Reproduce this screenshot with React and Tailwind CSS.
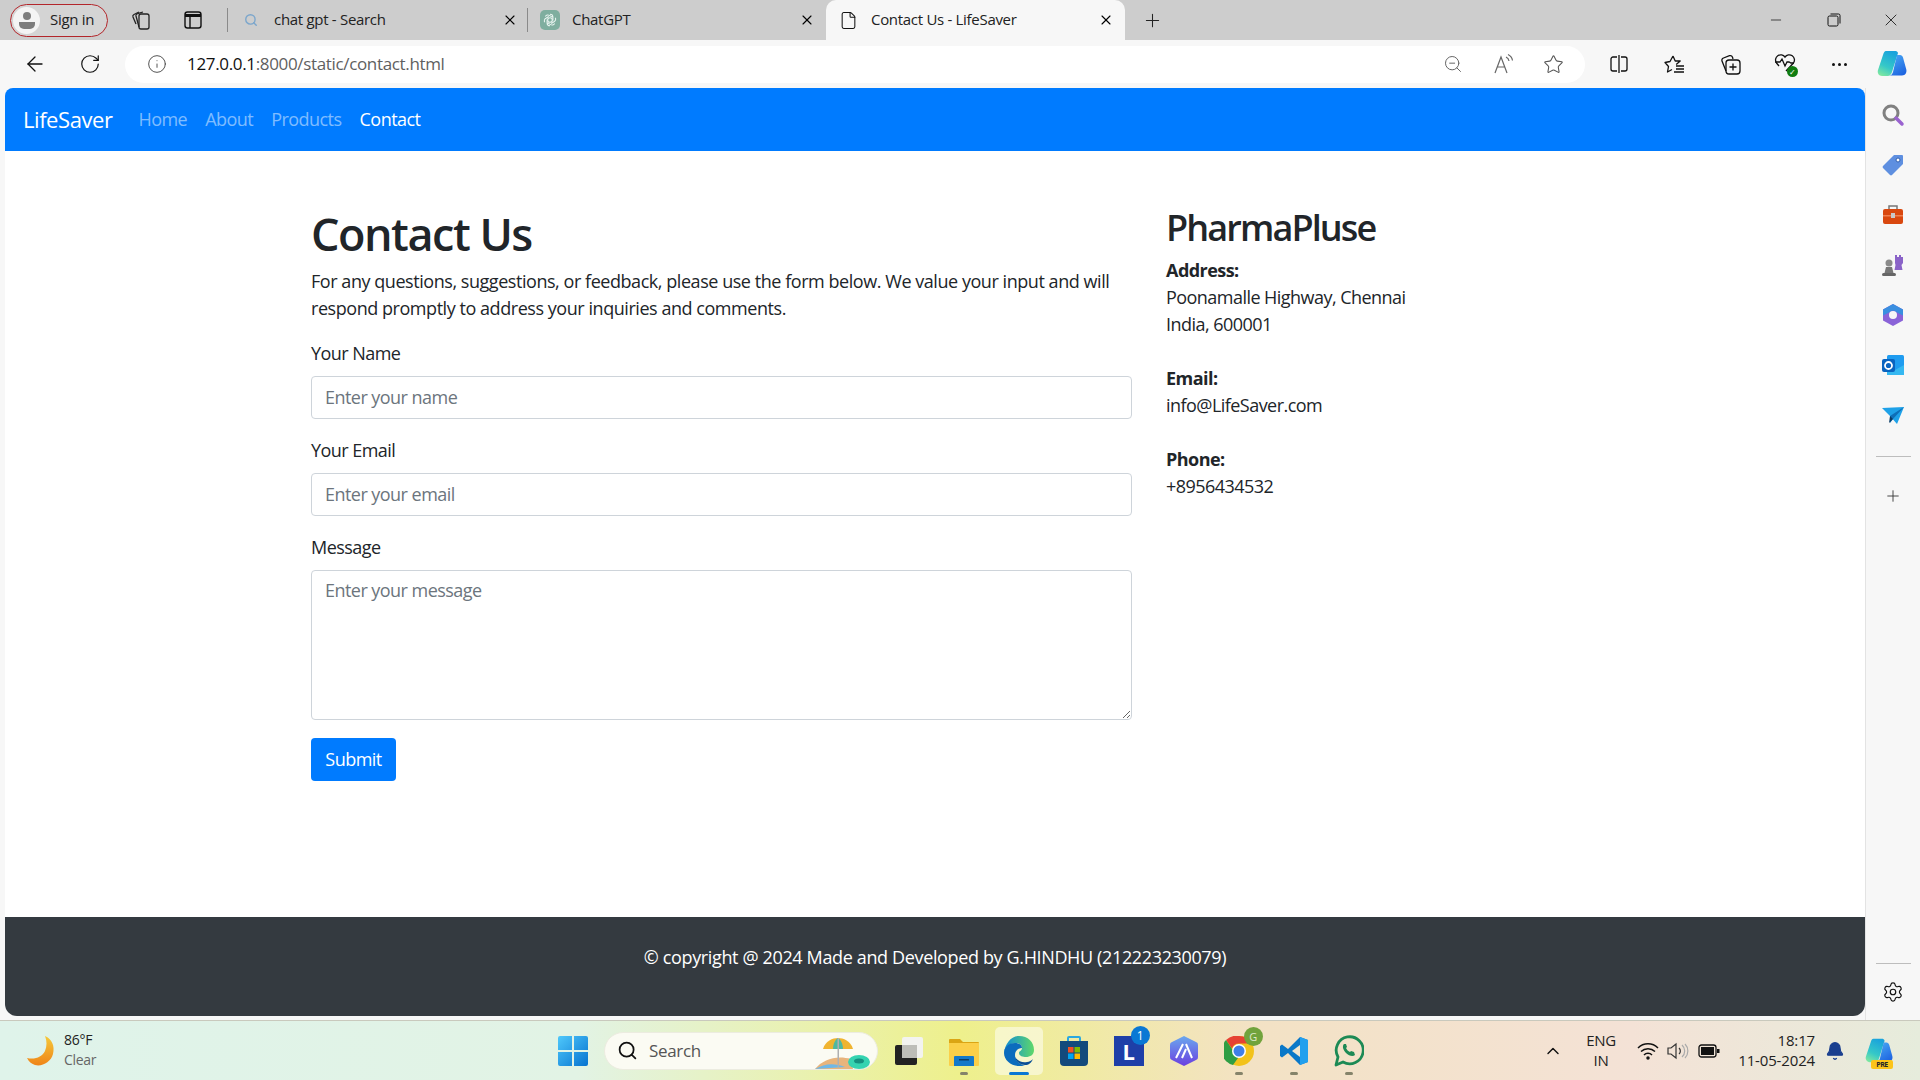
import { ArrowLeft, RotateCw, Info, ZoomOut, Star, Plus, X, Minus, Search, ChevronUp, Bell, Settings, File } from 'lucide-react';

const FONT = "font-['Open_Sans','Noto_Sans',sans-serif]";

function TabClose() {
  return <X size={16} strokeWidth={1.7} className="text-black shrink-0" />;
}

function SignIn() {
  return (
    <div className="ml-[10px] w-[98px] h-[33px] rounded-full border border-[#b3262b] flex items-center bg-[#d4d4d4]">
      <div className="ml-[2px] w-[27px] h-[27px] rounded-full bg-[#f4f4f4] flex items-center justify-center">
        <svg width="18" height="20" viewBox="0 0 18 20">
          <circle cx="9" cy="6" r="4" fill="#7d7d7d" />
          <path d="M1 12h16v2a5 5 0 0 1-5 5H6a5 5 0 0 1-5-5z" fill="#7d7d7d" />
        </svg>
      </div>
      <span className="ml-[10px] text-[15px] tracking-[-0.02em] text-[#222] pb-[1px]">Sign in</span>
    </div>
  );
}

function TitleBar() {
  return (
    <div className="h-[40px] bg-[#cdcdcd] flex items-center shrink-0">
      <SignIn />
      <svg className="ml-[22px]" width="22" height="22" viewBox="0 0 22 22" fill="none" stroke="#222" strokeWidth="1.3">
        <rect x="9" y="5" width="10" height="15" rx="2" />
        <path d="M9 18 6 7a2 2 0 0 1 1.5-2.4L13 3" />
        <path d="M6 15 3 8a2 2 0 0 1 1-2.500L9 3" />
      </svg>
      <svg className="ml-[31px]" width="20" height="20" viewBox="0 0 20 20" fill="none" stroke="#111" strokeWidth="1.4">
        <rect x="2" y="2" width="16" height="16" rx="2.5" />
        <path d="M2 5.500h16" strokeWidth="3" />
        <path d="M7 6v12" />
      </svg>
      <div className="ml-[24px] w-px h-[24px] bg-[#8a8a8a]" />
      <Search size={14} strokeWidth={2.4} className="ml-[16px] text-[#7ba6cc]" />
      <span className="ml-[16px] w-[228px] text-[15px] tracking-[-0.02em] text-[#222] pb-[1px]">chat gpt - Search</span>
      <TabClose />
      <div className="ml-[9px] w-px h-[24px] bg-[#8a8a8a]" />
      <div className="ml-[12px] w-[20px] h-[20px] rounded-[5px] bg-[#7fae9f] flex items-center justify-center">
        <svg width="14" height="14" viewBox="0 0 24 24" fill="none" stroke="#e9f4f0" strokeWidth="1.8">
          <circle cx="12" cy="12" r="4" />
          <path d="M12 2a5 5 0 0 1 5 5v6M21 8a5 5 0 0 1-2 7l-5 3M20 18a5 5 0 0 1-7 2l-5-3M12 22a5 5 0 0 1-5-5v-6M3 16a5 5 0 0 1 2-7l5-3M4 6a5 5 0 0 1 7-2l5 3" />
        </svg>
      </div>
      <span className="ml-[12px] w-[227px] text-[15px] tracking-[-0.02em] text-[#222] pb-[1px]">ChatGPT</span>
      <TabClose />
      <div className="ml-[11px] w-[299px] h-full bg-[#f7f7f7] rounded-t-[10px] flex items-center">
        <File size={19} strokeWidth={1.3} className="ml-[13px] text-[#111]" />
        <span className="ml-[13px] w-[227px] text-[15px] tracking-[-0.02em] text-[#222] pb-[1px]">Contact Us - LifeSaver</span>
        <TabClose />
      </div>
      <Plus size={21} strokeWidth={1.2} className="ml-[17px] text-[#222]" />
      <div className="ml-auto flex items-center">
        <Minus size={16} strokeWidth={1.1} className="text-[#111]" />
        <svg className="ml-[43px]" width="14" height="14" viewBox="0 0 14 14" fill="none" stroke="#111" strokeWidth="1">
          <rect x="1" y="3" width="10" height="10" rx="1.5" />
          <path d="M3.5 1h8A1.5 1.5 0 0 1 13 2.500v8" />
        </svg>
        <X size={20} strokeWidth={1} className="ml-[40px] mr-[19px] text-[#111]" />
      </div>
    </div>
  );
}

function ReadAloudIcon() {
  return (
    <svg width="22" height="22" viewBox="0 0 22 22" fill="none" stroke="#666" strokeWidth="1.2">
      <path d="M2 20 8 4l6 16M4.500 14h7" />
      <path d="M13 4a5 5 0 0 1 3 4M15 1.500a8 8 0 0 1 4.500 6" />
    </svg>
  );
}

function SplitIcon() {
  return (
    <svg width="20" height="20" viewBox="0 0 20 20" fill="none" stroke="#111" strokeWidth="1.3">
      <path d="M8 3H4a2 2 0 0 0-2 2v10a2 2 0 0 0 2 2h4M12 3h4a2 2 0 0 1 2 2v10a2 2 0 0 1-2 2h-4M10 1v18" />
    </svg>
  );
}

function FavListIcon() {
  return (
    <svg width="22" height="20" viewBox="0 0 22 20" fill="none" stroke="#111" strokeWidth="1.3" strokeLinejoin="round">
      <path d="M9 2l2.200 5h5l-4 3.500M8 15.500 3.500 18l1-5.500L1 8.500l5-1L9 2" />
      <path d="M12 12h8M12 15h8M10 18h10" />
    </svg>
  );
}

function CollectionsIcon() {
  return (
    <svg width="22" height="22" viewBox="0 0 22 22" fill="none" stroke="#111" strokeWidth="1.3">
      <rect x="7" y="7" width="14" height="14" rx="3" />
      <path d="M14 10.500v7M10.500 14h7" />
      <path d="M7 18 3 8a2.500 2.500 0 0 1 1.500-3l6-2.300a2.500 2.500 0 0 1 3 1.500L14 6" />
    </svg>
  );
}

function HealthIcon() {
  return (
    <span className="relative block w-[22px] h-[22px]">
      <svg width="22" height="20" viewBox="0 0 22 20" fill="none" stroke="#111" strokeWidth="1.3">
        <path d="M5 13 2.500 10A5 5 0 0 1 11 4a5 5 0 0 1 8.500 6L12 18" />
        <path d="M1 9h5l2-3 3 7 2-4h2l2 1h3" />
      </svg>
      <span className="absolute right-[-2px] bottom-[-2px] w-[11px] h-[11px] rounded-full bg-[#107c10] flex items-center justify-center text-white text-[8px] leading-none">✓</span>
    </span>
  );
}

function CopilotIcon({ size = 30, id = 'c' }) {
  return (
    <svg width={size} height={size} viewBox="0 0 30 30">
      <defs>
        <linearGradient id={`${id}A`} x1="0.6" y1="0" x2="0.2" y2="1">
          <stop offset="0" stopColor="#1aa3dc" />
          <stop offset="0.6" stopColor="#35c8c8" />
          <stop offset="1" stopColor="#7fe8a0" />
        </linearGradient>
        <linearGradient id={`${id}B`} x1="0.2" y1="0" x2="0.8" y2="1">
          <stop offset="0" stopColor="#48a8f4" />
          <stop offset="1" stopColor="#1d62e0" />
        </linearGradient>
      </defs>
      <path d="M9 2h9c1.500 0 2.500.5 3 2l-6 19c-.6 2-2 4-4.500 4H5c-3 0-5-3-4-6L6 6c.6-2.200 1.500-4 3-4z" fill={`url(#${id}A)`} />
      <path d="M20 6h3c1.500 0 2.500 1 3 2.500l3.300 12c.7 3-1 6-4.300 6H12c2 0 3.300-1 4-3.500z" fill={`url(#${id}B)`} />
    </svg>
  );
}

function ToolBar() {
  return (
    <div className="h-[48px] bg-[#f7f7f7] flex items-center shrink-0">
      <ArrowLeft size={24} strokeWidth={1.3} className="ml-[23px] text-[#111]" />
      <RotateCw size={22} strokeWidth={1.3} className="ml-[32px] text-[#111]" />
      <div className="ml-[24px] w-[1460px] h-[37px] rounded-full bg-white flex items-center">
        <Info size={20} strokeWidth={1.1} className="ml-[22px] text-[#444]" />
        <span className="ml-[20px] w-[1256px] text-[17px] tracking-[-0.02em] text-[#5f5f5f] pb-[2px]"><span className="text-[#111]">127.0.0.1</span>:8000/static/contact.html</span>
        <ZoomOut size={20} strokeWidth={1.2} className="text-[#666]" />
        <div className="ml-[30px]"><ReadAloudIcon /></div>
        <Star size={21} strokeWidth={1.2} className="ml-[28px] text-[#555]" />
      </div>
      <div className="ml-[24px]"><SplitIcon /></div>
      <div className="ml-[35px]"><FavListIcon /></div>
      <div className="ml-[33px]"><CollectionsIcon /></div>
      <div className="ml-[33px]"><HealthIcon /></div>
      <div className="ml-[36px] flex gap-[3px]">
        <span className="w-[3px] h-[3px] rounded-full bg-[#111]" />
        <span className="w-[3px] h-[3px] rounded-full bg-[#111]" />
        <span className="w-[3px] h-[3px] rounded-full bg-[#111]" />
      </div>
      <div className="ml-[30px]"><CopilotIcon id="top" /></div>
    </div>
  );
}

function NavBar() {
  return (
    <nav className="h-[63px] bg-[#007bff] rounded-t-[8px] flex items-center shrink-0 text-[18px]">
      <a className="ml-[18px] text-[22px] tracking-[-0.02em] text-white">LifeSaver</a>
      <a className="ml-[26px] tracking-[-0.03em] text-white/50">Home</a>
      <a className="ml-[18px] tracking-[-0.03em] text-white/50">About</a>
      <a className="ml-[18px] tracking-[-0.03em] text-white/50">Products</a>
      <a className="ml-[18px] tracking-[-0.03em] text-white">Contact</a>
    </nav>
  );
}

function Field({ label, placeholder, type = 'text' }) {
  return (
    <div className="mb-[18px]">
      <label className="block mb-[9px] leading-[27px]">{label}</label>
      <input
        type={type}
        placeholder={placeholder}
        className="block w-full h-[43px] px-[13px] pb-[1px] border border-[#ced4da] rounded-[4px] bg-white placeholder:text-[#6c757d] tracking-[-0.03em]"
      />
    </div>
  );
}

function ContactForm() {
  return (
    <div className="w-[821px]">
      <h1 className="pt-[2px] text-[45px] leading-[54px] font-semibold tracking-[-0.033em] mb-[7px]">Contact Us</h1>
      <p className="mb-[18px] leading-[27px] tracking-[-0.025em]">For any questions, suggestions, or feedback, please use the form below. We value your input and will respond promptly to address your inquiries and comments.</p>
      <Field label="Your Name" placeholder="Enter your name" />
      <Field label="Your Email" placeholder="Enter your email" type="email" />
      <div className="mb-[18px]">
        <label className="block mb-[9px] leading-[27px]">Message</label>
        <textarea
          placeholder="Enter your message"
          className="block w-full h-[150px] px-[13px] py-[6px] border border-[#ced4da] rounded-[4px] bg-white placeholder:text-[#6c757d] tracking-[-0.03em]"
        />
      </div>
      <button className="w-[85px] h-[43px] bg-[#007bff] text-white rounded-[4px]">Submit</button>
    </div>
  );
}

function ContactInfo() {
  return (
    <div className="ml-[34px] w-[400px]">
      <h2 className="pt-[1px] text-[36px] leading-[43px] font-semibold tracking-[-0.052em] mb-[8px]">PharmaPluse</h2>
      <p className="mb-[27px]"><strong className="font-bold">Address:</strong><br />Poonamalle Highway, Chennai<br />India, 600001</p>
      <p className="mb-[27px]"><strong className="font-bold">Email:</strong><br />info@LifeSaver.com</p>
      <p><strong className="font-bold">Phone:</strong><br />+8956434532</p>
    </div>
  );
}

function SideBar() {
  return (
    <aside className="w-[55px] bg-[#f7f7f7] border-l border-[#e3e3e3] flex flex-col items-center pt-[2px] pb-[4px]">
      <div className="h-[50px] flex items-center justify-center">
        <svg width="24" height="24" viewBox="0 0 24 24" fill="none">
          <circle cx="10" cy="10" r="7" stroke="#808080" strokeWidth="3" />
          <path d="M15 15l6 6" stroke="#9a63d0" strokeWidth="3.500" strokeLinecap="round" />
        </svg>
      </div>
      <div className="h-[50px] flex items-center justify-center">
        <svg width="24" height="24" viewBox="0 0 24 24">
          <path d="M13 2h8a1 1 0 0 1 1 1v8L11 22a1.500 1.500 0 0 1-2 0L2 15a1.500 1.500 0 0 1 0-2z" fill="#5e8fe0" />
          <circle cx="17" cy="7" r="2" fill="#fff" stroke="#2f5fb0" />
        </svg>
      </div>
      <div className="h-[50px] flex items-center justify-center">
        <svg width="24" height="24" viewBox="0 0 24 24">
          <path d="M8 6V3h8v3" fill="none" stroke="#777" strokeWidth="1.500" />
          <rect x="2" y="6" width="20" height="15" rx="2" fill="#d9480f" />
          <rect x="2" y="12" width="20" height="1.500" fill="#f08050" />
          <rect x="10" y="10" width="4" height="5" fill="#c8c8c8" />
        </svg>
      </div>
      <div className="h-[50px] flex items-center justify-center">
        <svg width="24" height="24" viewBox="0 0 24 24">
          <path d="M14 2h2v2h2V2h2v2h2V2v8l-1.500 2 1 5h-8l1-5L14 10z" fill="#8a63c8" />
          <circle cx="8" cy="10" r="3.500" fill="#8a8a8a" />
          <path d="M5 14h6l1.500 6H3.500z" fill="#777" />
          <rect x="1" y="20" width="14" height="3" rx="1.500" fill="#666" />
        </svg>
      </div>
      <div className="h-[50px] flex items-center justify-center">
        <svg width="24" height="24" viewBox="0 0 24 24">
          <path d="M12 1l10 5.500v11L12 23 2 17.500v-11z" fill="#8a63d8" />
          <path d="M12 1l10 5.500v6L15 9a4 4 0 0 0-6 0L2 12.500v-6z" fill="#3a8fe0" />
          <circle cx="12" cy="12" r="4" fill="#f7f7f7" />
        </svg>
      </div>
      <div className="h-[50px] flex items-center justify-center">
        <svg width="24" height="24" viewBox="0 0 24 24">
          <rect x="6" y="2" width="17" height="20" rx="1.500" fill="#1f9cf0" />
          <path d="M6 12l8 5 9-5v10H6z" fill="#35b8f1" />
          <rect x="1" y="6" width="13" height="13" rx="2" fill="#0a64c0" />
          <circle cx="7.500" cy="12.500" r="3.500" fill="none" stroke="#fff" strokeWidth="1.800" />
        </svg>
      </div>
      <div className="h-[50px] flex items-center justify-center">
        <svg width="24" height="24" viewBox="0 0 24 24">
          <path d="M1 5l22-1-7 17-7-8z" fill="#1ea1e8" />
          <path d="M9 13l14-9-11 12-3 4z" fill="#0e6fb8" />
          <path d="M9 13l-1 7 4-4z" fill="#0b3d66" />
        </svg>
      </div>
      <div className="mt-[16px] w-[35px] h-px bg-[#bdbdbd]" />
      <Plus size={18} strokeWidth={1.2} className="mt-[30px] text-[#333]" />
      <div className="mt-auto w-[35px] h-px bg-[#bdbdbd]" />
      <Settings size={22} strokeWidth={1.3} className="mt-[17px] mb-[13px] text-[#111]" />
    </aside>
  );
}

function TaskApp({ children, dot, active }) {
  return (
    <div className="w-[55px] h-[50px] flex items-center justify-center relative">
      {active && <div className="absolute left-[4px] top-[1px] w-[48px] h-[48px] rounded-[5px] bg-white/50" />}
      <div className="relative">{children}</div>
      {dot && <span className="absolute left-[24px] bottom-[1px] w-[8px] h-[3px] rounded-full bg-[#85836a]" />}
      {active && <span className="absolute left-[18px] bottom-[1px] w-[20px] h-[3px] rounded-full bg-[#0a78d4]" />}
    </div>
  );
}

function TaskBar() {
  return (
    <div className="h-[60px] shrink-0 border-t border-[#c9c9bd] flex items-center bg-[linear-gradient(90deg,#dff3ea_0%,#e2f3e5_30%,#eef08c_50%,#f3e2c4_65%,#f4e2d6_85%,#e6ecdc_100%)] text-[14px]">
      {/* weather */}
      <svg className="ml-[26px]" width="30" height="32" viewBox="0 0 30 32">
        <defs>
          <linearGradient id="moon" x1="0" y1="0" x2="0" y2="1">
            <stop offset="0" stopColor="#f5c93a" />
            <stop offset="1" stopColor="#ef8418" />
          </linearGradient>
        </defs>
        <path d="M19 1c7 3 10 10 8 18-2 8-11 13-18 11-3-1-6-3-8-7 8 2 15-1 18-7 2-5 2-10 0-15z" fill="url(#moon)" />
      </svg>
      <div className="ml-[8px] w-[81px] leading-[20px] tracking-[-0.02em] pb-[2px]">
        <div className="text-[#222]">86°F</div>
        <div className="text-[#666]">Clear</div>
      </div>
      {/* start */}
      <svg className="ml-[413px]" width="30" height="30" viewBox="0 0 30 30">
        <defs>
          <linearGradient id="win" x1="0" y1="0" x2="1" y2="1">
            <stop offset="0" stopColor="#4fc8fb" />
            <stop offset="1" stopColor="#0673d0" />
          </linearGradient>
        </defs>
        <path d="M0 2a2 2 0 0 1 2-2h12v14H0zM16 0h12a2 2 0 0 1 2 2v12H16zM0 16h14v14H2a2 2 0 0 1-2-2zM16 16h14v12a2 2 0 0 1-2 2H16z" fill="url(#win)" />
      </svg>
      {/* search */}
      <div className="ml-[16px] w-[274px] h-[38px] rounded-full bg-[#fbfbf3] border border-[#ecece0] flex items-center relative">
        <Search size={21} strokeWidth={2} className="ml-[12px] text-[#111]" />
        <span className="ml-[11px] text-[17px] tracking-[-0.02em] text-[#555]">Search</span>
        <svg className="absolute right-[6px] top-[2px]" width="58" height="36" viewBox="0 0 58 36">
          <path d="M2 34c8-10 22-14 36-10l2 10z" fill="#e8b47c" />
          <path d="M2 34c10-6 20-6 30-2" fill="#6fb8e8" />
          <path d="M10 14C12 6 20 3 25 3s13 3 15 11z" fill="#f0b430" />
          <path d="M20 14c0-5 2-9 5-11 3 2 5 6 5 11z" fill="#50b8a0" />
          <rect x="24.500" y="3" width="1.500" height="29" fill="#b0b0b0" />
          <ellipse cx="46" cy="27" rx="11" ry="7" fill="#34d3b0" />
          <ellipse cx="46" cy="26" rx="5" ry="2.500" fill="#159080" />
        </svg>
      </div>
      <div className="ml-[3px] flex items-center">
        <TaskApp>
          <svg width="30" height="30" viewBox="0 0 30 30">
            <rect x="1" y="9" width="22" height="20" rx="2" fill="#222" />
            <rect x="8" y="1" width="21" height="21" rx="2" fill="#f3f3f0" />
            <rect x="8" y="9" width="15" height="13" fill="#bdbdb8" />
          </svg>
        </TaskApp>
        <TaskApp dot>
          <svg width="30" height="30" viewBox="0 0 30 30">
            <path d="M0 4a1 1 0 0 1 1-1h10l3 3h15a1 1 0 0 1 1 1v4H0z" fill="#dba514" />
            <path d="M0 7h30v22a1 1 0 0 1-1 1H1a1 1 0 0 1-1-1z" fill="#fbcf48" />
            <path d="M5 21a1 1 0 0 1 1-1h18a1 1 0 0 1 1 1v9H5z" fill="#1479c9" />
            <rect x="10" y="23" width="10" height="1.500" fill="#0a3d66" />
          </svg>
        </TaskApp>
        <TaskApp active>
          <svg width="32" height="32" viewBox="0 0 32 32">
            <defs>
              <linearGradient id="edgeA" x1="0" y1="0" x2="1" y2="0">
                <stop offset="0" stopColor="#0f8bd8" />
                <stop offset="1" stopColor="#5fd86a" />
              </linearGradient>
            </defs>
            <path d="M16 1c9 0 15 6 15 14 0 5-4 7-8 7-3 0-7-1-7-4 0-2 3-2 3-5 0-3-3-5-6-5-6 0-11 5-12 10C2 9 8 1 16 1z" fill="url(#edgeA)" />
            <path d="M1 18c0-5 4-10 11-10 4 0 7 2 7 5-3 0-7 2-7 7 0 5 4 10 10 10-2 1-4 1-6 1C8 31 1 25 1 18z" fill="#0c6cbd" />
            <path d="M22 30c-5 0-9-3-10-8 3 4 7 6 12 5 2 0 5-2 6-3-2 4-4 6-8 6z" fill="#0a4f96" />
          </svg>
        </TaskApp>
        <TaskApp>
          <svg width="30" height="32" viewBox="0 0 30 32">
            <path d="M9 7V3a1 1 0 0 1 1-1h10a1 1 0 0 1 1 1v4" fill="none" stroke="#2aa8e0" strokeWidth="2" />
            <path d="M1 6h28v21a4 4 0 0 1-4 4H5a4 4 0 0 1-4-4z" fill="#134a7c" />
            <rect x="9" y="12" width="5.500" height="5.500" fill="#f25022" />
            <rect x="15.500" y="12" width="5.500" height="5.500" fill="#7fba00" />
            <rect x="9" y="18.500" width="5.500" height="5.500" fill="#00a4ef" />
            <rect x="15.500" y="18.500" width="5.500" height="5.500" fill="#ffb900" />
          </svg>
        </TaskApp>
        <TaskApp>
          <div className="w-[30px] h-[30px] bg-[#1e3fa8] text-white font-bold text-[22px] leading-[30px] text-center">L</div>
          <span className="absolute right-[-6px] top-[-10px] w-[19px] h-[19px] rounded-full bg-[#0a78d4] text-white text-[12px] leading-[19px] text-center">1</span>
        </TaskApp>
        <TaskApp>
          <svg width="30" height="32" viewBox="0 0 30 32">
            <defs>
              <linearGradient id="hex" x1="0" y1="0" x2="0" y2="1">
                <stop offset="0" stopColor="#6aa8ee" />
                <stop offset="1" stopColor="#6a3fe0" />
              </linearGradient>
            </defs>
            <path d="M15 1l12 6a3 3 0 0 1 2 3v12a3 3 0 0 1-2 3l-12 6-12-6a3 3 0 0 1-2-3V10a3 3 0 0 1 2-3z" fill="url(#hex)" />
            <path d="M7 23 14 9M13 23l4-9M23 23l-6-14" stroke="#fff" strokeWidth="2" fill="none" />
          </svg>
        </TaskApp>
        <TaskApp dot>
          <svg width="30" height="30" viewBox="0 0 30 30">
            <circle cx="15" cy="15" r="15" fill="#f2c21a" />
            <path d="M15 0a15 15 0 0 1 13 7.500H15a7.500 7.500 0 0 0-7 5L2 4a15 15 0 0 1 13-4z" fill="#e64234" />
            <path d="M2 4l6 9 6 9-5 7A15 15 0 0 1 2 4z" fill="#2f9e44" />
            <circle cx="15" cy="15" r="7" fill="#fff" />
            <circle cx="15" cy="15" r="5.500" fill="#3f7fe8" />
          </svg>
          <span className="absolute right-[-9px] top-[-9px] w-[19px] h-[19px] rounded-full bg-[#71a33c] text-[#dfe8c8] text-[11px] leading-[19px] text-center">G</span>
        </TaskApp>
        <TaskApp dot>
          <svg width="30" height="30" viewBox="0 0 30 30">
            <path d="M21 1 9 13 3 8.500 1 10v10l2 1.500L9 17l12 12 8-3V4z" fill="#0a78c8" />
            <path d="M21 1l8 3v22l-8 3z" fill="#22a0ee" />
            <path d="M21 9l-8 6 8 6z" fill="#f1e6cf" />
          </svg>
        </TaskApp>
        <TaskApp dot>
          <svg width="30" height="32" viewBox="0 0 30 32" fill="none">
            <path d="M2 30l2-8A13.500 13.500 0 1 1 9 27z" stroke="#1d8a55" strokeWidth="2.800" strokeLinejoin="round" />
            <path d="M10 9c-2 2-1 6 2 9s7 4 9 2l-1-3-3-1-1 1c-2-1-3-2-4-4l1-1-1-3z" fill="#1d8a55" />
          </svg>
        </TaskApp>
      </div>
      {/* tray */}
      <ChevronUp size={20} strokeWidth={1.7} className="ml-[167px] text-[#111]" />
      <div className="ml-[16px] w-[44px] text-center leading-[20px] text-[15px] tracking-[-0.02em] text-[#222] pb-[2px]">ENG<br />IN</div>
      <svg className="ml-[14px]" width="22" height="18" viewBox="0 0 22 18" fill="none" stroke="#111" strokeWidth="1.5">
        <path d="M1 6a14 14 0 0 1 20 0M4 9.500a10 10 0 0 1 14 0M7 13a5.500 5.500 0 0 1 8 0" />
        <circle cx="11" cy="16" r="1" fill="#111" />
      </svg>
      <svg className="ml-[8px]" width="22" height="18" viewBox="0 0 22 18" fill="none" stroke="#333" strokeWidth="1.2">
        <path d="M1 6h3l5-4v14l-5-4H1z" />
        <path d="M12 6a4 4 0 0 1 0 6" />
        <path d="M15 3a8 8 0 0 1 0 12M18 2a10 10 0 0 1 0 14" stroke="#aaa" />
      </svg>
      <svg className="ml-[9px]" width="22" height="14" viewBox="0 0 22 14" fill="none">
        <rect x="1" y="1" width="17" height="12" rx="2.500" stroke="#111" strokeWidth="1.300" />
        <rect x="3" y="3" width="13" height="8" fill="#111" />
        <rect x="19" y="5" width="2.500" height="4" fill="#111" />
      </svg>
      <div className="ml-[10px] w-[85px] text-right leading-[20px] tracking-[-0.01em] text-[15px] whitespace-nowrap text-[#222] pb-[2px]">18:17<br />11-05-2024</div>
      <Bell size={20} fill="#1a3f8f" strokeWidth={1.5} className="ml-[10px] text-[#1a3f8f]" />
      <div className="ml-[20px] relative">
        <CopilotIcon size={28} id="bar" />
        <span className="absolute left-[6px] bottom-[-4px] w-[22px] h-[9px] rounded-[2px] bg-[#fcc419] text-[7px] leading-[9px] font-bold text-center">PRE</span>
      </div>
    </div>
  );
}

export default function App() {
  return (
    <div className={`${FONT} w-[1920px] h-[1080px] flex flex-col overflow-hidden text-[18px] leading-[27px] text-[#212529] tracking-[-0.03em]`}>
      <TitleBar />
      <ToolBar />
      <div className="flex-1 flex min-h-0 bg-[#f7f7f7]">
        <div className="ml-[5px] w-[1860px] mb-[4px] flex flex-col rounded-b-[12px] overflow-hidden">
          <NavBar />
          <main className="flex-1 bg-white pt-[54px] pl-[306px] flex items-start">
            <ContactForm />
            <ContactInfo />
          </main>
          <footer className="h-[99px] bg-[#343a40] pt-[27px] text-white text-center tracking-[-0.02em]">
            © copyright @ 2024 Made and Developed by G.HINDHU (212223230079)
          </footer>
        </div>
        <SideBar />
      </div>
      <TaskBar />
    </div>
  );
}
